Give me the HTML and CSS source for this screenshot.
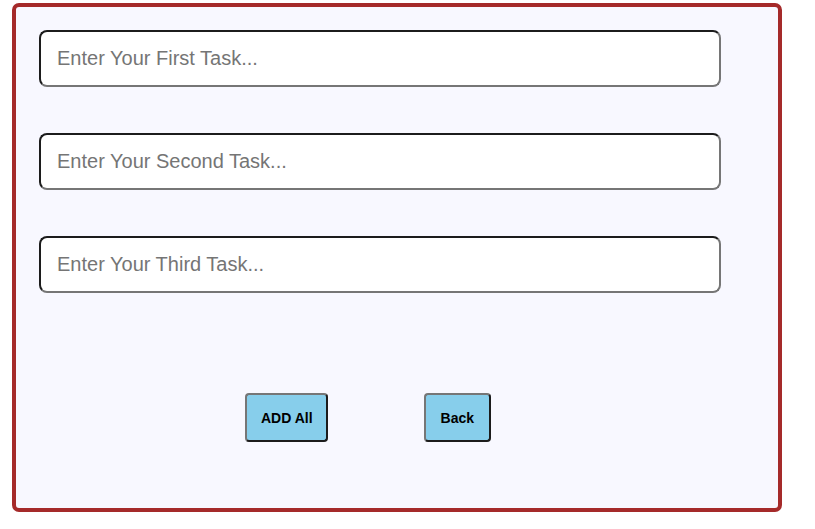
FILE: index.html
```html
<!DOCTYPE html>
<html>
<head>
<meta charset="utf-8">
<link rel="stylesheet" href="styles.css">
</head>
<body>
<div class="card">
  <div class="fields">
    <input class="task" type="text" placeholder="Enter Your First Task...">
    <input class="task" type="text" placeholder="Enter Your Second Task...">
    <input class="task" type="text" placeholder="Enter Your Third Task...">
  </div>
  <div class="actions">
    <button class="btn">ADD All</button>
    <button class="btn">Back</button>
  </div>
</div>
</body>
</html>
```
FILE: styles.css
```css
html, body {
  margin: 0;
  padding: 0;
  background: #ffffff;
}
body {
  font-family: "Liberation Sans", Arial, sans-serif;
}
.card {
  box-sizing: border-box;
  margin: 3px 0 0 12px;
  width: 770px;
  height: 509px;
  border: 4px solid #a52a2a;
  border-radius: 7px;
  background: #f8f8ff;
  padding: 23px;
}
.fields {
  display: flex;
  flex-direction: column;
  gap: 46px;
}
.task {
  box-sizing: border-box;
  width: 682px;
  height: 57px;
  margin: 0;
  border: 2px solid;
  border-color: #1c1c1c #767676 #767676 #1c1c1c;
  border-radius: 8px;
  background: #ffffff;
  padding: 0 16px;
  font-family: "Liberation Sans", Arial, sans-serif;
  font-size: 20px;
  color: #222;
  outline: none;
}
.task::placeholder {
  color: #757575;
}
.actions {
  display: flex;
  gap: 96px;
  margin-top: 100px;
  padding-left: 206px;
}
.btn {
  box-sizing: border-box;
  height: 49px;
  padding: 0 13px 0 14px;
  margin: 0;
  border: 2px solid;
  border-color: #767676 #1c1c1c #1c1c1c #767676;
  border-radius: 4px;
  background: #87ceeb;
  color: #000;
  font-family: "Liberation Sans", Arial, sans-serif;
  font-size: 14px;
  font-weight: bold;
}
.btn + .btn {
  padding: 0 15px 0 15px;
}
```
